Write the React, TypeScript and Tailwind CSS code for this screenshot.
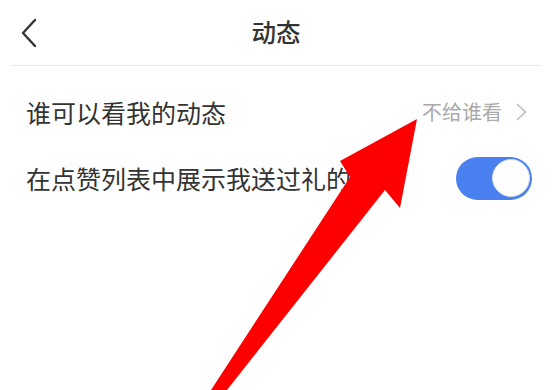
export default function App() {
  return (
    <div
      className="relative w-[552px] h-[390px] overflow-hidden bg-white text-[#333]"
      style={{ fontFamily: '"Noto Sans CJK SC", "Noto Sans", sans-serif' }}
    >
      {/* Header */}
      <div className="grid grid-cols-[1fr_auto_1fr] items-center h-[65px]">
        <div className="pl-[21px] flex items-center">
          <svg width="16" height="30" viewBox="0 0 16 30">
            <polyline points="14,2 2,15 14,28" fill="none" stroke="#333" strokeWidth="2.4" strokeLinecap="round" strokeLinejoin="round" />
          </svg>
        </div>
        <div className="text-[24.5px] leading-none font-medium">动态</div>
        <div />
      </div>
      <div className="mx-[10px] h-px bg-[#ececec]" />

      {/* Settings rows */}
      <div className="pt-[13px] pl-[26px] pr-[20px]">
        <div className="flex items-center justify-between h-[66px]">
          <span className="text-[25px] leading-none">谁可以看我的动态</span>
          <div className="flex items-center gap-[14px] pr-[5px] text-[#aaa]">
            <span className="text-[20px] leading-none">不给谁看</span>
            <svg width="11" height="18" viewBox="0 0 11 18">
              <polyline points="1.5,1.5 9.5,9 1.5,16.5" fill="none" stroke="#bbb" strokeWidth="1.6" strokeLinecap="round" strokeLinejoin="round" />
            </svg>
          </div>
        </div>
        <div className="flex items-center justify-between h-[66px]">
          <span className="text-[25px] leading-none">在点赞列表中展示我送过礼的人</span>
          <div className="relative w-[76px] h-[43px] rounded-full bg-[#4a80ef]">
            <div className="absolute right-[2px] top-[2.5px] w-[38px] h-[38px] rounded-full bg-white border border-[#d8dde8]" />
          </div>
        </div>
      </div>

      {/* Red annotation arrow */}
      <svg className="absolute inset-0 pointer-events-none" width="552" height="390" viewBox="0 0 552 390">
        <polygon
          points="417,119 400,208 385,190 227,390 211,390 350,177 340,161"
          fill="#ff0000"
        />
      </svg>
    </div>
  );
}
